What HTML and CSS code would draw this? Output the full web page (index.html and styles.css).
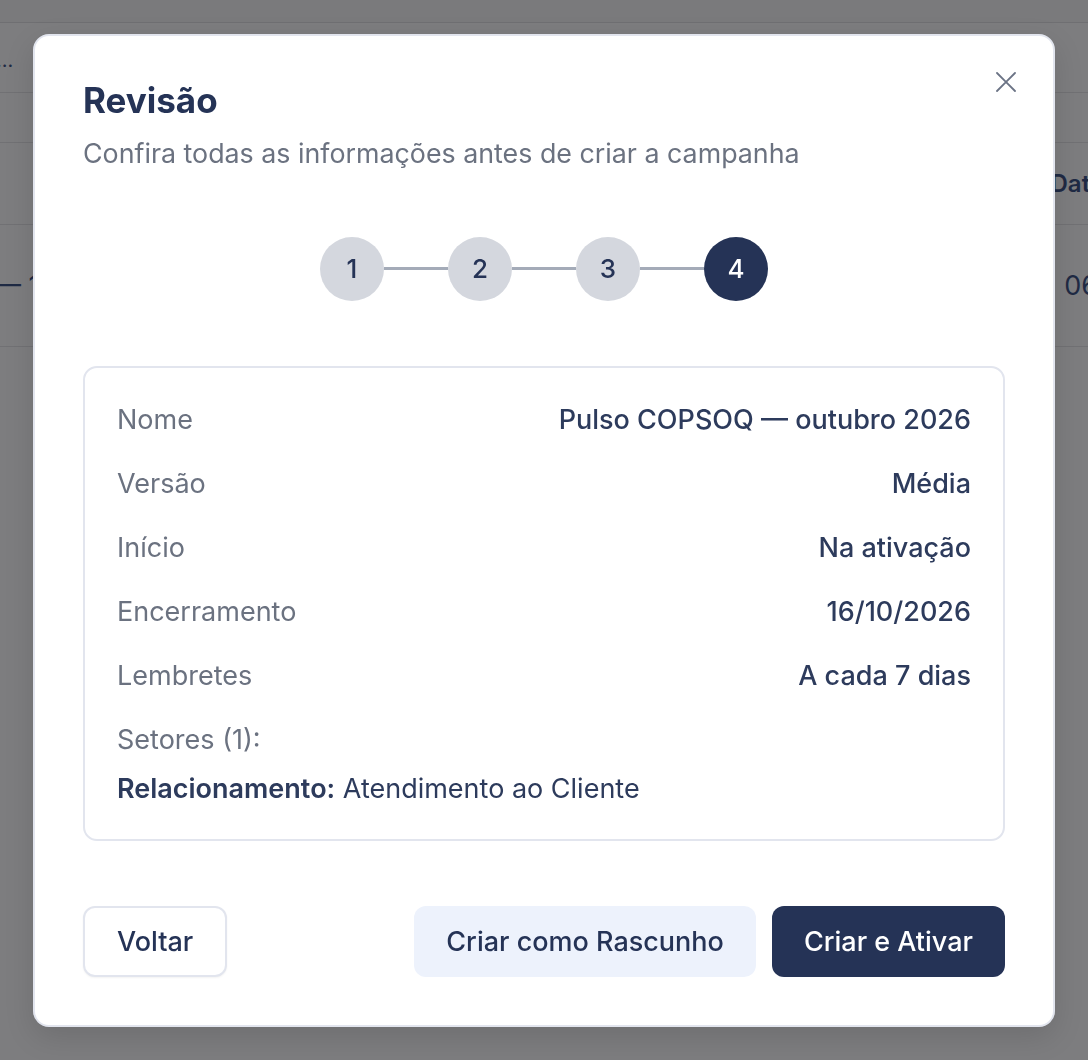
FILE: index.html
```html
<!DOCTYPE html>
<html lang="pt-BR">
<head>
    <meta charset="UTF-8">
    <meta name="viewport" content="width=device-width, initial-scale=1.0">
    <title>Campanhas - Revisão</title>
    <link rel="stylesheet" href="styles.css">
</head>
<body>
    <div class="page">
        <div class="topbar"></div>
        <div class="bg-row bg-row-a"><span class="bg-dots">...</span></div>
        <div class="bg-row bg-row-b"></div>
        <div class="bg-row bg-row-head"><span class="bg-head">Data</span></div>
        <div class="bg-row bg-row-body"><span class="bg-dash">— 1</span><span class="bg-date">06</span></div>
    </div>

    <div class="overlay">
        <div class="modal">
            <button class="close" aria-label="Fechar">
                <svg width="22" height="22" viewBox="0 0 22 22" fill="none" stroke="currentColor" stroke-width="1.8" stroke-linecap="round">
                    <path d="M2 2L20 20M20 2L2 20"/>
                </svg>
            </button>

            <h2 class="title">Revisão</h2>
            <p class="subtitle">Confira todas as informações antes de criar a campanha</p>

            <div class="stepper">
                <div class="step">1</div>
                <div class="step-line"></div>
                <div class="step">2</div>
                <div class="step-line"></div>
                <div class="step">3</div>
                <div class="step-line"></div>
                <div class="step active">4</div>
            </div>

            <div class="summary">
                <div class="row">
                    <span class="label">Nome</span>
                    <span class="value">Pulso COPSOQ — outubro 2026</span>
                </div>
                <div class="row">
                    <span class="label">Versão</span>
                    <span class="value">Média</span>
                </div>
                <div class="row">
                    <span class="label">Início</span>
                    <span class="value">Na ativação</span>
                </div>
                <div class="row">
                    <span class="label">Encerramento</span>
                    <span class="value">16/10/2026</span>
                </div>
                <div class="row">
                    <span class="label">Lembretes</span>
                    <span class="value">A cada 7 dias</span>
                </div>
                <div class="sectors">
                    <span class="label">Setores (1):</span>
                    <p class="sector"><strong>Relacionamento:</strong> Atendimento ao Cliente</p>
                </div>
            </div>

            <div class="actions">
                <button class="btn btn-outline">Voltar</button>
                <div class="actions-right">
                    <button class="btn btn-soft">Criar como Rascunho</button>
                    <button class="btn btn-primary">Criar e Ativar</button>
                </div>
            </div>
        </div>
    </div>
</body>
</html>
```

FILE: styles.css
```css
:root {
    --navy: #253356;
    --text: #2d3b5c;
    --muted: #6b7280;
    --border: #e2e5ee;
    --step: #d4d7de;
    --step-line: #a4abb8;
    --soft: #edf2fc;
    --backdrop: #7d7d7f;
}

* {
    margin: 0;
    padding: 0;
    box-sizing: border-box;
    font-family: Inter, 'Noto Sans', sans-serif;
}

body {
    width: 1088px;
    height: 1060px;
    overflow: hidden;
    background-color: var(--backdrop);
}

/* pagina atras do modal (ja escurecida) */
.page {
    color: #1f2a44;
}

.topbar {
    height: 23px;
    border-bottom: 1px solid #6f6f72;
    background-color: #7a7a7c;
}

.bg-row {
    border-bottom: 1px solid #717174;
    display: flex;
    align-items: center;
    justify-content: space-between;
    font-size: 27px;
}

.bg-row-a { height: 70px; }
.bg-row-b { height: 50px; }
.bg-row-head { height: 82px; justify-content: flex-end; }
.bg-row-body { height: 122px; }

.bg-dots {
    margin-left: -4px;
    margin-top: 4px;
    font-size: 20px;
}

.bg-head {
    font-weight: 600;
    font-size: 24px;
    margin-right: -16px;
}

.bg-dash {
    margin-left: -6px;
}

.bg-date {
    margin-right: -10px;
}

.overlay {
    position: fixed;
    inset: 0;
    display: flex;
    align-items: center;
    justify-content: center;
}

.modal {
    position: relative;
    width: 1022px;
    height: 993px;
    background-color: #fff;
    border: 2px solid var(--border);
    border-radius: 16px;
    padding: 44px 48px 0 48px;
    box-shadow: 0 10px 30px rgba(0, 0, 0, 0.12);
}

.close {
    position: absolute;
    top: 35px;
    right: 36px;
    display: flex;
    background: none;
    border: none;
    color: #6b7385;
    cursor: pointer;
}

.title {
    font-size: 35px;
    font-weight: 700;
    color: var(--navy);
    line-height: 40px;
}

.subtitle {
    margin-top: 16px;
    font-size: 26.8px;
    color: var(--muted);
    line-height: 34px;
}

.stepper {
    display: flex;
    align-items: center;
    justify-content: center;
    margin-top: 67px;
}

.step {
    width: 64px;
    height: 64px;
    border-radius: 50%;
    background-color: var(--step);
    color: var(--navy);
    display: flex;
    align-items: center;
    justify-content: center;
    font-size: 26px;
    font-weight: 500;
}

.step.active {
    background-color: var(--navy);
    color: #fff;
}

.step-line {
    width: 64px;
    height: 3px;
    background-color: var(--step-line);
}

.summary {
    margin-top: 65px;
    border: 2px solid var(--border);
    border-radius: 14px;
    padding: 36px 32px 34px 32px;
    display: flex;
    flex-direction: column;
    gap: 32px;
}

.row {
    display: flex;
    justify-content: space-between;
    align-items: center;
    line-height: 32px;
    font-size: 27px;
}

.label {
    color: var(--muted);
}

.value {
    color: var(--text);
    font-weight: 500;
}

.sectors {
    display: flex;
    flex-direction: column;
    gap: 17px;
    line-height: 32px;
    font-size: 27px;
}

.sector {
    color: var(--text);
}

.sector strong {
    font-weight: 600;
}

.actions {
    margin-top: 65px;
    display: flex;
    justify-content: space-between;
}

.actions-right {
    display: flex;
    gap: 16px;
}

.btn {
    height: 71px;
    padding: 0 32px;
    border-radius: 12px;
    font-size: 27px;
    font-weight: 500;
    cursor: pointer;
    border: none;
}

.btn-outline {
    background-color: #fff;
    border: 2px solid var(--border);
    color: var(--navy);
    box-shadow: 0 1px 2px rgba(0, 0, 0, 0.05);
}

.btn-soft {
    background-color: var(--soft);
    color: var(--navy);
}

.btn-primary {
    background-color: var(--navy);
    color: #fff;
}
```
